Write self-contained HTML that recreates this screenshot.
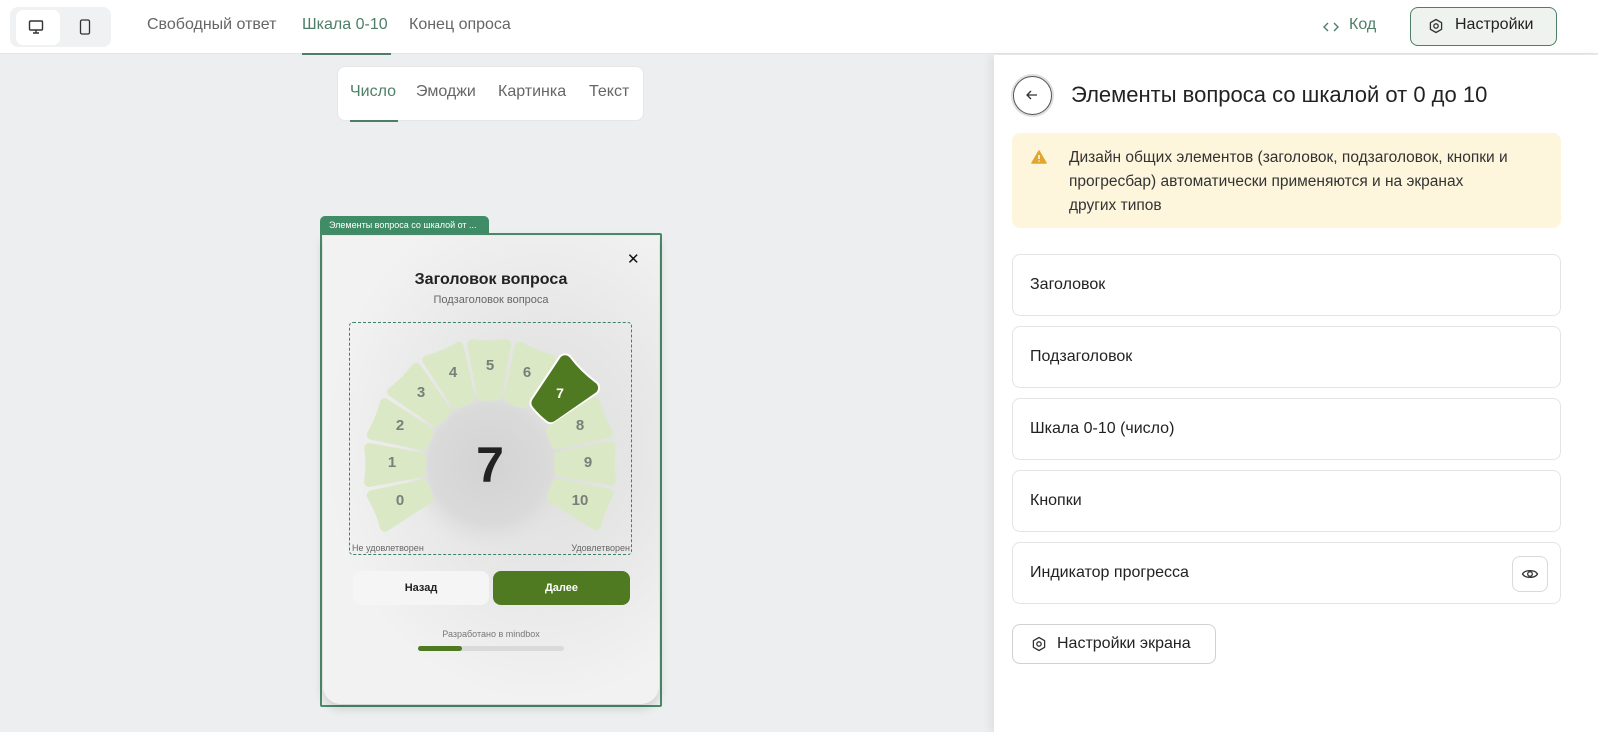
<!DOCTYPE html>
<html><head><meta charset="utf-8">
<style>
*{box-sizing:border-box;margin:0;padding:0}
body{width:1598px;height:732px;overflow:hidden;background:#eceeef;font-family:"Liberation Sans","Noto Sans CJK SC",sans-serif;position:relative;color:#222}
.abs{position:absolute}
.top{left:0;top:0;width:1598px;height:54px;background:#fff;border-bottom:1px solid #e2e4e6}
.tab{font-size:16px;color:#666;top:16px}
.panel{left:994px;top:55px;width:604px;height:677px;background:#fff;box-shadow:-4px 0 8px rgba(0,0,0,.06)}
.item{left:1012px;width:549px;height:62px;border:1px solid #e2e4e6;border-radius:8px;background:#fff;font-size:16px;padding:21px 0 0 17px;color:#222}
</style></head><body>
<div class="abs top"></div>
<div class="abs" style="left:10px;top:7px;width:101px;height:40px;background:#f0f1f2;border-radius:8px"></div>
<div class="abs" style="left:16px;top:10px;width:44px;height:35px;background:#fff;border-radius:7px"></div>
<svg class="abs" style="left:28px;top:19px" width="16" height="16" viewBox="0 0 16 16"><rect x="1.5" y="2" width="13" height="9" rx="1" fill="none" stroke="#333" stroke-width="1.4"/><path d="M8 11v3M5 14h6" stroke="#333" stroke-width="1.4"/></svg>
<svg class="abs" style="left:79px;top:19px" width="12" height="16" viewBox="0 0 12 16"><rect x="1.5" y="1" width="9" height="14" rx="1.5" fill="none" stroke="#333" stroke-width="1.3"/></svg>
<div class="abs tab" style="left:147px">Свободный ответ</div>
<div class="abs tab" style="left:302px;color:#4e7e68">Шкала 0-10</div>
<div class="abs tab" style="left:409px">Конец опроса</div>
<div class="abs" style="left:302px;top:53px;width:89px;height:2px;background:#4e7e68"></div>
<svg class="abs" style="left:1323px;top:20px" width="16" height="14" viewBox="0 0 16 14"><path d="M5 3L1 7l4 4M11 3l4 4-4 4" fill="none" stroke="#4e7e68" stroke-width="1.4"/></svg>
<div class="abs tab" style="left:1349px;color:#4e7e68">Код</div>
<div class="abs" style="left:1410px;top:7px;width:147px;height:39px;background:#eef3f0;border:1px solid #4e7e68;border-radius:8px"></div>
<svg class="abs" style="left:1428px;top:18px" width="16" height="16" viewBox="0 0 16 16"><path d="M8 1.5l5.6 3.2v6.6L8 14.5l-5.6-3.2V4.7z" fill="none" stroke="#333" stroke-width="1.3" stroke-linejoin="round"/><circle cx="8" cy="8" r="2.2" fill="none" stroke="#333" stroke-width="1.3"/></svg>
<div class="abs tab" style="left:1455px;color:#222">Настройки</div>

<div class="abs" style="left:337px;top:66px;width:307px;height:55px;background:#fff;border-radius:8px;border:1px solid #e4e6e8"></div>
<div class="abs tab" style="left:350px;top:83px;color:#4e7e68">Число</div>
<div class="abs tab" style="left:416px;top:83px">Эмоджи</div>
<div class="abs tab" style="left:498px;top:83px">Картинка</div>
<div class="abs tab" style="left:589px;top:83px">Текст</div>
<div class="abs" style="left:350px;top:120px;width:48px;height:2px;background:#4e7e68"></div>

<div class="abs" style="left:320px;top:216px;width:169px;height:19px;background:#3f8c67;border-radius:5px 5px 0 0;color:#fff;font-size:9px;padding:4px 0 0 9px">Элементы вопроса со шкалой от ...</div>
<div class="abs" style="left:320px;top:233px;width:342px;height:474px;border:2px solid #4a8a6a;border-radius:2px;background:#eeefee"></div>
<div class="abs" style="left:323px;top:236px;width:336px;height:468px;border-radius:0 0 18px 18px;background:radial-gradient(ellipse at 65% 45%,#dcdddc 0,#e6e7e6 35%,#f1f2f1 70%);box-shadow:0 4px 10px rgba(0,0,0,.15)"></div>
<div class="abs" style="left:627px;top:250px;font-size:15px;color:#111">✕</div>
<div class="abs" style="left:323px;top:271px;width:336px;text-align:center;font-size:16px;font-weight:bold;color:#222">Заголовок вопроса</div>
<div class="abs" style="left:323px;top:294px;width:336px;text-align:center;font-size:11px;color:#666">Подзаголовок вопроса</div>
<div class="abs" style="left:349px;top:322px;width:283px;height:233px;border:1px dashed #3f8068;border-radius:4px"></div>
<svg class="abs" style="left:320px;top:320px" width="340" height="240" id="sc">
<defs><radialGradient id="rg"><stop offset="0" stop-color="#d2d3d2"/><stop offset=".7" stop-color="#d9dad9"/><stop offset="1" stop-color="#e2e3e2" stop-opacity="0"/></radialGradient></defs>
<circle cx="170" cy="145" r="85" fill="url(#rg)"/>
<g id="segs"></g>
<g font-family="Liberation Sans,sans-serif" font-weight="bold" font-size="15" fill="#7a7f78" text-anchor="middle">
<text x="80" y="185">0</text><text x="72" y="147">1</text><text x="80" y="110">2</text><text x="101" y="77">3</text><text x="133" y="57">4</text><text x="170" y="50">5</text><text x="207" y="57">6</text><text x="240" y="78" fill="#fff" font-size="14">7</text><text x="260" y="110">8</text><text x="268" y="147">9</text><text x="260" y="185">10</text>
<text x="170" y="162" font-size="50" fill="#222">7</text>
</g>
<text x="32" y="231" font-family="Liberation Sans,sans-serif" font-size="9" fill="#666">Не удовлетворен</text>
<text x="310" y="231" font-family="Liberation Sans,sans-serif" font-size="9" fill="#666" text-anchor="end">Удовлетворен</text>
</svg>
<div class="abs" style="left:353px;top:571px;width:136px;height:34px;background:#f4f5f4;border-radius:8px;text-align:center;font-size:11px;font-weight:bold;padding-top:11px">Назад</div>
<div class="abs" style="left:493px;top:571px;width:137px;height:34px;background:#4f7a22;border-radius:8px;text-align:center;font-size:11px;font-weight:bold;color:#fff;padding-top:11px">Далее</div>
<div class="abs" style="left:323px;top:629px;width:336px;text-align:center;font-size:9px;color:#777">Разработано в mindbox</div>
<div class="abs" style="left:418px;top:646px;width:146px;height:5px;background:#d9dad9;border-radius:3px"></div>
<div class="abs" style="left:418px;top:646px;width:44px;height:5px;background:#4f7a22;border-radius:3px"></div>

<div class="abs panel"></div>
<div class="abs" style="left:1013px;top:76px;width:39px;height:39px;border-radius:50%;border:1.5px solid #555;box-shadow:0 0 0 2px #ddd;background:#fff"></div>
<svg class="abs" style="left:1024px;top:87px" width="16" height="16" viewBox="0 0 16 16"><path d="M13 8H3M7 4L3 8l4 4" fill="none" stroke="#333" stroke-width="1.3"/></svg>
<div class="abs" style="left:1071px;top:82px;font-size:22px;color:#222">Элементы вопроса со шкалой от 0 до 10</div>
<div class="abs" style="left:1012px;top:133px;width:549px;height:95px;background:#fdf5dc;border-radius:8px"></div>
<svg class="abs" style="left:1031px;top:150px" width="16" height="14" viewBox="0 0 16 14"><path d="M8 1L15 13H1z" fill="#e0a630" stroke="#e0a630" stroke-linejoin="round" stroke-width="1.5"/><path d="M8 5v4M8 10.5v1" stroke="#fff" stroke-width="1.5"/></svg>
<div class="abs" style="left:1069px;top:146px;width:480px;font-size:15.5px;line-height:24px;color:#333;white-space:nowrap">Дизайн общих элементов (заголовок, подзаголовок, кнопки и<br>прогресбар) автоматически применяются и на экранах<br>других типов</div>
<div class="abs item" style="top:254px">Заголовок</div>
<div class="abs item" style="top:326px">Подзаголовок</div>
<div class="abs item" style="top:398px">Шкала 0-10 (число)</div>
<div class="abs item" style="top:470px">Кнопки</div>
<div class="abs item" style="top:542px">Индикатор прогресса</div>
<div class="abs" style="left:1512px;top:556px;width:36px;height:36px;border:1px solid #d8dadc;border-radius:8px"></div>
<svg class="abs" style="left:1521px;top:566px" width="18" height="16" viewBox="0 0 18 16"><path d="M1.5 8C4 3.5 14 3.5 16.5 8 14 12.5 4 12.5 1.5 8z" fill="none" stroke="#333" stroke-width="1.3"/><circle cx="9" cy="8" r="2.3" fill="none" stroke="#333" stroke-width="1.3"/></svg>
<div class="abs" style="left:1012px;top:624px;width:204px;height:40px;border:1px solid #cfd2d4;border-radius:8px;font-size:16px;padding:10px 0 0 44px">Настройки экрана</div>
<svg class="abs" style="left:1031px;top:636px" width="16" height="16" viewBox="0 0 16 16"><path d="M8 1.5l5.6 3.2v6.6L8 14.5l-5.6-3.2V4.7z" fill="none" stroke="#333" stroke-width="1.3" stroke-linejoin="round"/><circle cx="8" cy="8" r="2.2" fill="none" stroke="#333" stroke-width="1.3"/></svg>
<script>
(function(){
var cx=170,cy=145,g=document.getElementById('segs'),s='';
function p(r,a){a=a*Math.PI/180;return (cx+r*Math.cos(a)).toFixed(1)+' '+(cy-r*Math.sin(a)).toFixed(1);}
for(var i=0;i<11;i++){
 var t=202.4-22.4*i,r1=70,r2=122,col='#dbe8c6';
 var hi=6.2,ho=8;
 if(i==7){r1=78;r2=128;col='#4f7a22';hi=7;ho=8.5;}
 var d='M'+p(r1,t-hi)+' L'+p(r2,t-ho)+' A'+r2+' '+r2+' 0 0 1 '+p(r2,t+ho)+' L'+p(r1,t+hi)+' A'+r1+' '+r1+' 0 0 0 '+p(r1,t-hi)+'Z';
 if(i==7){s+='<path d="'+d+'" fill="#fff" stroke="#fff" stroke-width="16" stroke-linejoin="round"/><path d="'+d+'" fill="'+col+'" stroke="'+col+'" stroke-width="12" stroke-linejoin="round"/>';}
 else s+='<path d="'+d+'" fill="'+col+'" stroke="'+col+'" stroke-width="10" stroke-linejoin="round"/>';
}
g.innerHTML=s;
})();
</script>
</body></html>
